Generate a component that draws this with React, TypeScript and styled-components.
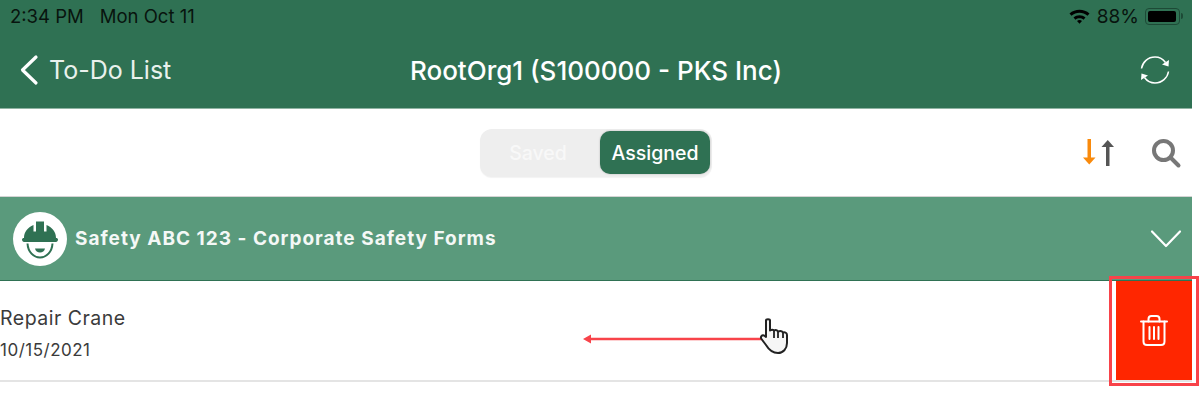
import React from "react";
import styled, { createGlobalStyle } from "styled-components";

const GlobalStyle = createGlobalStyle`
  html, body {
    margin: 0;
    background: #fff;
    font-family: "Inter", "Liberation Sans", sans-serif;
  }
`;

const App: React.FC = () => {
  return (
    <Page>
      <GlobalStyle />
      <Screen>
        <Header>
          <StatusBar>
            <StatusGroup>
              <span>2:34 PM</span>
              <span>Mon Oct 11</span>
            </StatusGroup>
            <StatusRight>
              <svg width="23" height="16" viewBox="0 0 22 16">
                <path d="M1 5.500C6.500 .6 15.500 .6 21 5.500L19 7.800C14.500 3.800 7.500 3.800 3 7.800Z" fill="#000" />
                <path d="M5 9.500C8.500 6.500 13.500 6.500 17 9.500L15 11.700C12.700 9.800 9.300 9.800 7 11.700Z" fill="#000" />
                <path d="M8.500 13C10 11.800 12 11.800 13.500 13L11 15.800Z" fill="#000" />
              </svg>
              <span>88%</span>
              <Battery>
                <BatteryFill />
              </Battery>
              <BatteryCap />
            </StatusRight>
          </StatusBar>
          <NavBar>
            <BackLink>
              <svg width="20" height="32" viewBox="0 0 20 32" fill="none" stroke="#fff" strokeWidth="3.200" strokeLinecap="round" strokeLinejoin="round">
                <path d="M17 3L3.500 16L17 29" />
              </svg>
              <span>To-Do List</span>
            </BackLink>
            <NavTitle>RootOrg1 (S100000 - PKS Inc)</NavTitle>
            <RefreshSlot>
              <svg width="32" height="32" viewBox="0 0 32 32" fill="none" stroke="#fff" strokeWidth="1.500">
                <path d="M2.500 14.500C3.500 8 9 3 16 3C20.500 3 24 5 26.500 8.500" />
                <path d="M29.500 17.500C28.500 24 23 29 16 29C11.500 29 8 27 5.500 23.500" />
                <path d="M30 6L29.500 12.500L23 10.500Z" fill="#fff" stroke="none" />
                <path d="M2 26L2.500 19.500L9 21.500Z" fill="#fff" stroke="none" />
              </svg>
            </RefreshSlot>
          </NavBar>
        </Header>

        <Toolbar>
          <span />
          <Segmented>
            <Segment>Saved</Segment>
            <Segment $active>Assigned</Segment>
          </Segmented>
          <ToolIcons>
            <svg width="34" height="30" viewBox="0 0 34 30">
              <rect x="5.500" y="1" width="3.500" height="19" fill="#f98a0c" />
              <path d="M1 19.500H13.500L7.250 26.500Z" fill="#f98a0c" />
              <rect x="24" y="8" width="3.500" height="20" fill="#555" />
              <path d="M19.500 9H32L25.750 2Z" fill="#555" />
            </svg>
            <svg width="32" height="32" viewBox="0 0 32 32" fill="none" stroke="#777" strokeWidth="4" strokeLinecap="round">
              <circle cx="13.500" cy="13.500" r="9.500" />
              <path d="M21 21L28.500 28.500" />
            </svg>
          </ToolIcons>
        </Toolbar>

        <SectionBar>
          <SectionLeft>
            <HatBadge>
              <svg width="40" height="40" viewBox="0 0 40 40">
                <path d="M2 20.500C2 19.500 3 19 4 19C4 13 7.500 8.500 13.500 6V12.500H16V2.500H24V12.500H26.500V6C32.500 8.500 36 13 36 19C37 19 38 19.500 38 20.500C38 22 37 23 36 23H4C3 23 2 22 2 20.500Z" fill="#2f7153" />
                <path d="M7.500 24.500C8 33 13.500 38.500 20 38.500C26.500 38.500 32 33 32.500 24.500" fill="none" stroke="#2f7153" strokeWidth="2" />
                <path d="M15 29.500H25C24.500 32 22.500 33.500 20 33.500C17.500 33.500 15.500 32 15 29.500Z" fill="#2f7153" />
              </svg>
            </HatBadge>
            <SectionTitle>Safety ABC 123 - Corporate Safety Forms</SectionTitle>
          </SectionLeft>
          <svg width="32" height="20" viewBox="0 0 32 20" fill="none" stroke="#fff" strokeWidth="2.200" strokeLinecap="round" strokeLinejoin="round">
            <path d="M2 2.500L16 17L30 2.500" />
          </svg>
        </SectionBar>

        <ItemRow>
          <ItemText>
            <ItemName>Repair Crane</ItemName>
            <ItemDate>10/15/2021</ItemDate>
          </ItemText>
          <DeleteAction>
            <svg width="28" height="31" viewBox="0 0 28 31" fill="none" stroke="#fff" strokeWidth="2" strokeLinecap="round" strokeLinejoin="round">
              <path d="M1 6.500H27" />
              <path d="M8.500 6.500V4C8.500 2.300 9.800 1 11.500 1H16.500C18.200 1 19.500 2.300 19.500 4V6.500" />
              <path d="M3.500 6.500V26.500C3.500 28.500 5 30 7 30H21C23 30 24.500 28.500 24.500 26.500V6.500" />
              <path d="M9.500 12V24M14 12V24M18.500 12V24" />
            </svg>
          </DeleteAction>
        </ItemRow>
      </Screen>

      <SwipeArrow>
        <svg width="180" height="12" viewBox="0 0 180 12">
          <path d="M0 6L8 1.500V4.800H180V7.200H8V10.500Z" fill="#f8434a" />
        </svg>
      </SwipeArrow>
      <HandCursor>
        <svg width="32" height="38" viewBox="0 0 32 38">
          <path
            d="M7 3.500C7 1.800 11 1.800 11 3.500V13.500C12.500 12.500 14 12.500 15 13.500C16.500 12.800 18 13 19 14.500C21 13.800 23 14 24 15.500C25.500 15 28 15.500 28 18V26C28 32 24 36 19 36C13 36 10 33 7 28L2.500 22C1 20 3 17.500 5 18.500L7 20Z"
            fill="#f6f6f6"
            stroke="#222"
            strokeWidth="2"
            strokeLinejoin="round"
          />
          <path d="M15 14V21M19 15V21M24 16V21" stroke="#222" strokeWidth="1.800" fill="none" />
        </svg>
      </HandCursor>
      <Highlight />
    </Page>
  );
};

const Page = styled.div`
  position: relative;
  width: 1200px;
  height: 420px;
  overflow: hidden;
  background: #fff;
`;

const Screen = styled.div`
  width: 1192px;
  display: flex;
  flex-direction: column;
`;

const Header = styled.header`
  height: 109px;
  box-sizing: border-box;
  background: #2f7153;
  border-bottom: 1px solid #8fb3a2;
  display: flex;
  flex-direction: column;
`;

const StatusBar = styled.div`
  height: 32px;
  padding: 0 9px 0 10px;
  display: flex;
  align-items: center;
  justify-content: space-between;
  font-size: 18.500px;
  color: #08140e;
`;

const StatusGroup = styled.div`
  display: flex;
  gap: 16px;
`;

const StatusRight = styled.div`
  display: flex;
  align-items: center;
  gap: 6px;
  font-size: 19px;
`;

const Battery = styled.div`
  width: 35px;
  height: 17px;
  box-sizing: border-box;
  padding: 2px;
  border: 1px solid #1d4a36;
  border-radius: 4px;
  display: flex;
`;

const BatteryFill = styled.div`
  width: 28px;
  background: #000;
  border-radius: 2px;
`;

const BatteryCap = styled.div`
  width: 2px;
  height: 6px;
  margin-left: -5px;
  background: #1d4a36;
  border-radius: 0 2px 2px 0;
`;

const NavBar = styled.div`
  flex: 1;
  display: grid;
  grid-template-columns: 1fr auto 1fr;
  align-items: center;
  color: #fff;
`;

const BackLink = styled.div`
  padding-left: 19px;
  display: flex;
  align-items: center;
  gap: 10px;
  font-size: 25px;
  color: #e9f1ed;
`;

const NavTitle = styled.div`
  font-size: 26px;
  font-weight: 500;
`;

const RefreshSlot = styled.div`
  justify-self: end;
  padding-right: 21px;
  display: flex;
`;

const Toolbar = styled.div`
  height: 88px;
  box-sizing: border-box;
  border-bottom: 1px solid #d4d4d4;
  display: grid;
  grid-template-columns: 1fr auto 1fr;
  align-items: center;
  background: #fff;
`;

const Segmented = styled.div`
  width: 232px;
  height: 48px;
  box-sizing: border-box;
  padding: 3px 2px 3px 0;
  display: flex;
  justify-content: space-between;
  align-items: center;
  background: #eeeeee;
  border-radius: 12px;
  box-shadow: 0 1px 1px rgba(0, 0, 0, 0.05);
`;

const Segment = styled.div<{ $active?: boolean }>`
  height: 43px;
  width: ${(p) => (p.$active ? "110px" : "116px")};
  display: flex;
  align-items: center;
  justify-content: center;
  border-radius: 10px;
  font-size: 19.500px;
  font-weight: 500;
  color: ${(p) => (p.$active ? "#fff" : "#f8f8f8")};
  background: ${(p) => (p.$active ? "#2f7153" : "transparent")};
  box-shadow: ${(p) => (p.$active ? "0 0 2px rgba(0,0,0,.25)" : "none")};
`;

const ToolIcons = styled.div`
  justify-self: end;
  padding-right: 10px;
  display: flex;
  align-items: center;
  gap: 34px;
`;

const SectionBar = styled.div`
  height: 84px;
  box-sizing: border-box;
  background: #5a9a7c;
  border-bottom: 1px solid #2f7153;
  padding: 0 10px 0 13px;
  display: flex;
  align-items: center;
  justify-content: space-between;
`;

const SectionLeft = styled.div`
  display: flex;
  align-items: center;
  gap: 8px;
`;

const HatBadge = styled.div`
  width: 54px;
  height: 54px;
  border-radius: 50%;
  background: #fff;
  display: flex;
  align-items: center;
  justify-content: center;
`;

const SectionTitle = styled.div`
  font-size: 19px;
  font-weight: 700;
  letter-spacing: 1px;
  color: #f4f8f6;
`;

const ItemRow = styled.div`
  height: 101px;
  box-sizing: border-box;
  border-bottom: 2px solid #e4e4e4;
  display: flex;
  justify-content: space-between;
  background: #fff;
`;

const ItemText = styled.div`
  padding-top: 25px;
  display: flex;
  flex-direction: column;
  gap: 10px;
  color: #3b3b3b;
`;

const ItemName = styled.div`
  font-size: 19.500px;
  letter-spacing: 0.500px;
`;

const ItemDate = styled.div`
  font-size: 17px;
  letter-spacing: 0.500px;
`;

const DeleteAction = styled.div`
  width: 76px;
  background: #ff2600;
  display: flex;
  align-items: center;
  justify-content: center;
`;

const SwipeArrow = styled.div`
  position: absolute;
  left: 583px;
  top: 333px;
  display: flex;
`;

const HandCursor = styled.div`
  position: absolute;
  left: 759px;
  top: 317px;
  display: flex;
`;

const Highlight = styled.div`
  position: absolute;
  left: 1109px;
  top: 276px;
  width: 90px;
  height: 110px;
  box-sizing: border-box;
  border: 3px solid #f8434a;
`;

export default App;
